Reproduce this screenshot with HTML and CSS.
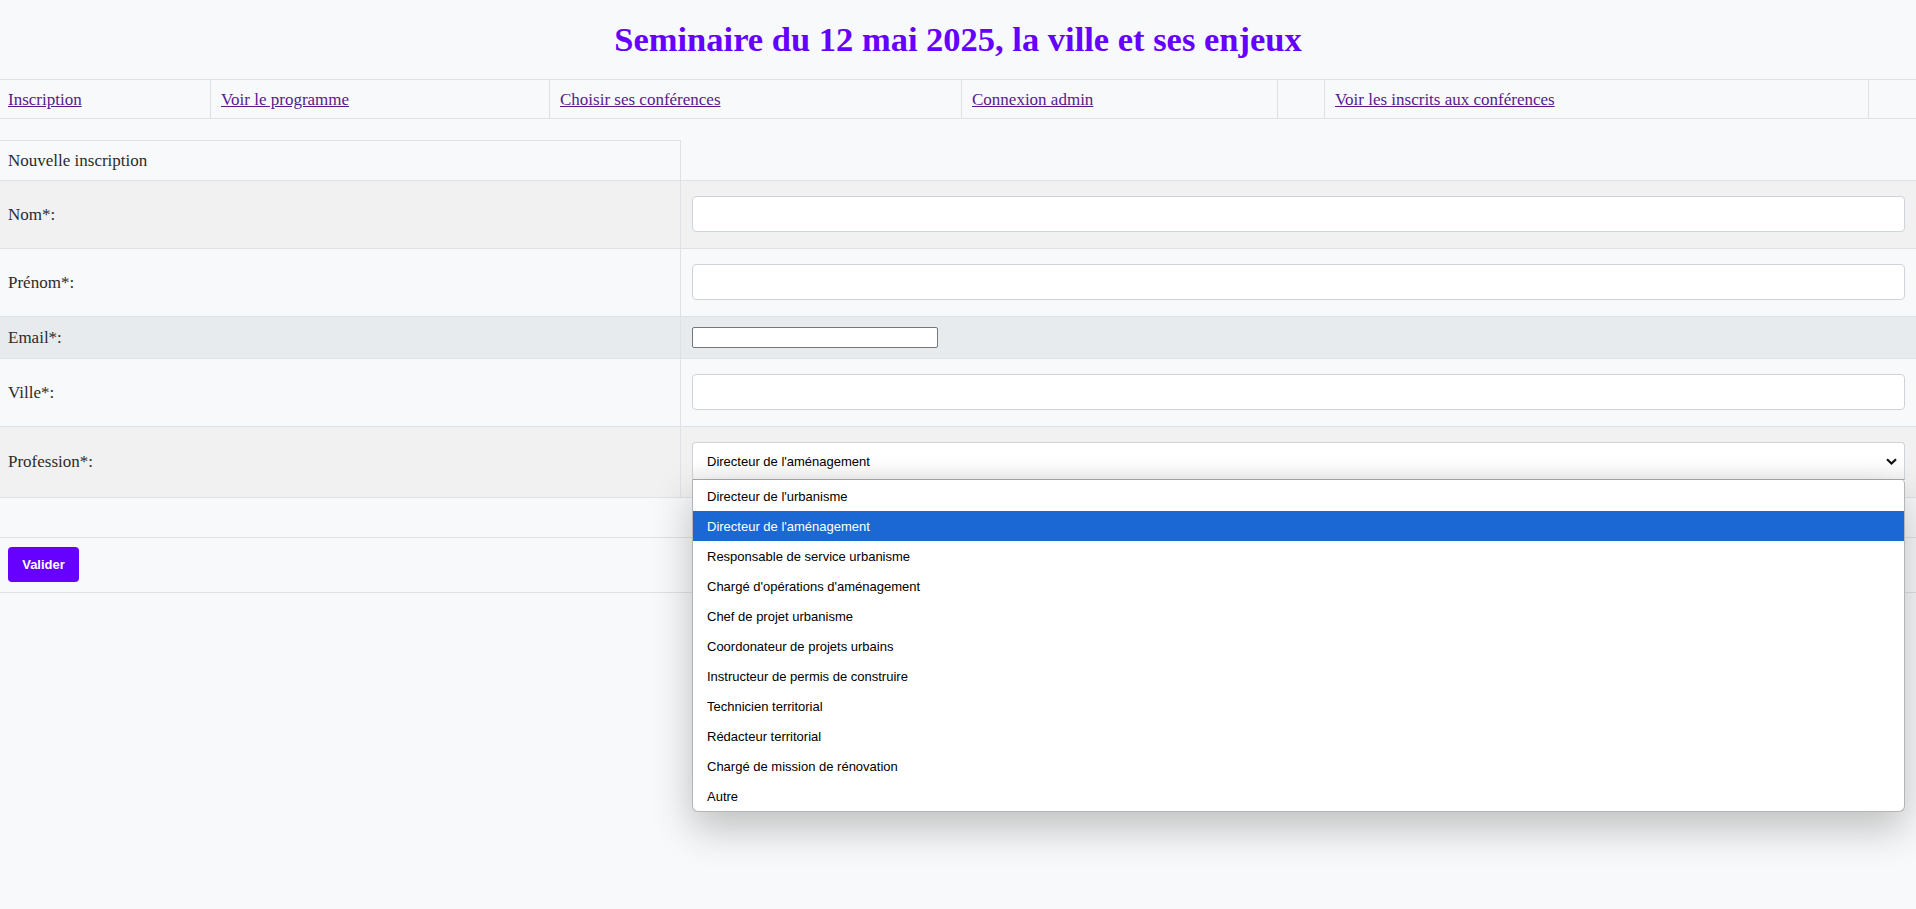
FILE: index.html
```html
<!DOCTYPE html>
<html lang="fr">
<head>
    <meta charset="UTF-8">
    <meta name="viewport" content="width=device-width, initial-scale=1.0">
    <title>Inscription</title>
    <link rel="stylesheet" href="styles.css">
</head>
<body>
    <h1 class="titre">Seminaire du 12 mai 2025, la ville et ses enjeux</h1>

    <nav class="menu">
        <div class="menu-item"><a href="#">Inscription</a></div>
        <div class="menu-item"><a href="#">Voir le programme</a></div>
        <div class="menu-item"><a href="#">Choisir ses conférences</a></div>
        <div class="menu-item"><a href="#">Connexion admin</a></div>
        <div class="menu-item"></div>
        <div class="menu-item"><a href="#">Voir les inscrits aux conférences</a></div>
        <div class="menu-item menu-fin"></div>
    </nav>

    <form class="formulaire">
        <div class="ligne ligne-entete">
            <div class="cellule-label">Nouvelle inscription</div>
            <div></div>
        </div>

        <div class="ligne fond-gris">
            <label class="cellule-label" for="nom">Nom*:</label>
            <div class="cellule-champ"><input class="champ" type="text" id="nom" name="nom"></div>
        </div>

        <div class="ligne">
            <label class="cellule-label" for="prenom">Prénom*:</label>
            <div class="cellule-champ"><input class="champ" type="text" id="prenom" name="prenom"></div>
        </div>

        <div class="ligne fond-bleute">
            <label class="cellule-label" for="email">Email*:</label>
            <div class="cellule-champ cellule-email"><input class="champ-simple" type="email" id="email" name="email"></div>
        </div>

        <div class="ligne">
            <label class="cellule-label" for="ville">Ville*:</label>
            <div class="cellule-champ"><input class="champ" type="text" id="ville" name="ville"></div>
        </div>

        <div class="ligne fond-gris">
            <label class="cellule-label">Profession*:</label>
            <div class="cellule-champ cellule-select">
                <div class="select-ouvert">
                    <span>Directeur de l'aménagement</span>
                    <svg class="chevron" width="11" height="7" viewBox="0 0 11 7">
                        <path d="M1 1.2 L5.5 5.5 L10 1.2" fill="none" stroke="#111" stroke-width="2.2"/>
                    </svg>
                    <ul class="liste-options">
                        <li>Directeur de l'urbanisme</li>
                        <li class="option-active">Directeur de l'aménagement</li>
                        <li>Responsable de service urbanisme</li>
                        <li>Chargé d'opérations d'aménagement</li>
                        <li>Chef de projet urbanisme</li>
                        <li>Coordonateur de projets urbains</li>
                        <li>Instructeur de permis de construire</li>
                        <li>Technicien territorial</li>
                        <li>Rédacteur territorial</li>
                        <li>Chargé de mission de rénovation</li>
                        <li>Autre</li>
                    </ul>
                </div>
            </div>
        </div>

        <div class="ligne-pleine ligne-vide"></div>

        <div class="ligne-pleine ligne-bouton">
            <button type="button" class="bouton">Valider</button>
        </div>
    </form>
</body>
</html>
```

FILE: styles.css
```css
html {
    height: 100%;
}

body {
    margin: 0;
    min-height: 100%;
    background-color: #f8f9fa;
    font-family: "Liberation Serif", "Times New Roman", serif;
    color: #212529;
}

.titre {
    margin: 0;
    height: 79px;
    display: flex;
    align-items: center;
    justify-content: center;
    font-size: 34.5px;
    font-weight: bold;
    color: #6600ff;
    box-sizing: border-box;
}

.menu {
    display: grid;
    grid-template-columns: 211px 339px 412px 316px 47px 544px 1fr;
    height: 40px;
    box-sizing: border-box;
    border-top: 1px solid #dee2e6;
    border-bottom: 1px solid #dee2e6;
}

.menu-item {
    display: flex;
    align-items: center;
    padding: 1px 10px 0 10px;
    border-right: 1px solid #dee2e6;
    font-size: 17px;
}

.menu-item:first-child {
    padding-left: 8px;
}

.menu-fin {
    border-right: none;
}

.menu-item a {
    color: #551a8b;
}

.formulaire {
    margin-top: 21px;
    border-bottom: 1px solid #dee2e6;
}

.ligne {
    display: grid;
    grid-template-columns: 681px 1fr;
    border-top: 1px solid #dee2e6;
}

.ligne-entete {
    border-top: none;
    height: 40px;
}

.ligne-entete .cellule-label {
    border-top: 1px solid #dee2e6;
}

.cellule-label {
    display: flex;
    align-items: center;
    padding-left: 8px;
    border-right: 1px solid #dee2e6;
    font-size: 17px;
    color: #2b2b2b;
}

.cellule-champ {
    padding: 15px 11px 16px 11px;
}

.cellule-email {
    padding: 10px 11px;
}

.cellule-select {
    position: relative;
    z-index: 5;
    padding: 15px 11px 17px 11px;
}

.fond-gris {
    background-color: #f1f1f1;
}

.fond-bleute {
    background-color: #e8ebee;
}

.champ {
    display: block;
    width: 100%;
    height: 36px;
    box-sizing: border-box;
    border: 1px solid #ced4da;
    border-radius: 4px;
    background: #fff;
}

.champ-simple {
    display: block;
    width: 246px;
    height: 21px;
    box-sizing: border-box;
    border: 1px solid #767676;
    border-radius: 2px;
    background: #fff;
    margin: 0;
}

.select-ouvert {
    position: relative;
    display: flex;
    align-items: center;
    justify-content: space-between;
    height: 38px;
    box-sizing: border-box;
    padding: 0 7px 0 14px;
    border: 1px solid #ced4da;
    border-bottom-color: #a8a8a8;
    border-radius: 4px 4px 0 0;
    background: linear-gradient(#ffffff 55%, #f3f3f3);
    font-family: "Liberation Sans", Arial, sans-serif;
    font-size: 13px;
    color: #000;
}

.liste-options {
    position: absolute;
    top: calc(100% + 1px);
    left: -1px;
    right: -1px;
    margin: 0;
    padding: 1px 0 0 0;
    list-style: none;
    background: #fff;
    border: 1px solid #b5b5b5;
    border-top: none;
    border-radius: 0 4px 6px 6px;
    box-shadow: 0 16px 40px rgba(0, 0, 0, 0.24);
    z-index: 10;
}

.liste-options li {
    height: 30px;
    display: flex;
    align-items: center;
    padding-left: 14px;
}

.liste-options .option-active {
    background-color: #1b67d3;
    color: #fff;
}

.ligne-pleine {
    border-top: 1px solid #dee2e6;
}

.ligne-vide {
    height: 39px;
}

.ligne-bouton {
    padding: 9px 8px 10px 8px;
}

.bouton {
    display: block;
    width: 71px;
    height: 35px;
    border: none;
    border-radius: 4px;
    background-color: #6600ff;
    color: #fff;
    font-family: "Liberation Sans", Arial, sans-serif;
    font-size: 13px;
    font-weight: bold;
}
```
